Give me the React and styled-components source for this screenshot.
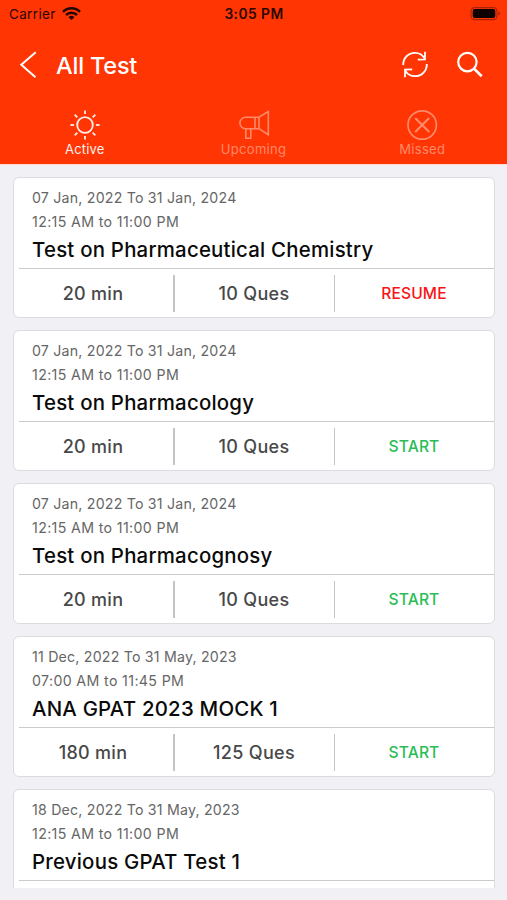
import React from "react";
import styled, { createGlobalStyle } from "styled-components";

const GlobalStyle = createGlobalStyle`
  * {
    box-sizing: border-box;
  }
  body {
    margin: 0;
    background-color: #f0f0f5;
    font-family: Inter, "Liberation Sans", sans-serif;
  }
`;

const Screen = styled.div`
  width: 507px;
  height: 900px;
  display: flex;
  flex-direction: column;
  background-color: #f0f0f5;
  overflow: hidden;
`;

const Header = styled.header`
  height: 165px;
  flex-shrink: 0;
  background-color: #ff3504;
  border-bottom: 1px solid #ffd9ce;
`;

const StatusBar = styled.div`
  height: 27px;
  padding: 0 6px 0 9px;
  display: grid;
  grid-template-columns: 1fr auto 1fr;
  align-items: center;
  color: #2b0700;
  font-size: 13.4px;
`;

const Carrier = styled.div`
  display: flex;
  align-items: center;
  gap: 6px;
  letter-spacing: 0.4px;
`;

const Clock = styled.div`
  padding-right: 2px;
  font-size: 13.8px;
  font-weight: 600;
  letter-spacing: 0.45px;
`;

const Battery = styled.div`
  display: flex;
  justify-content: flex-end;
`;

const NavBar = styled.div`
  height: 77px;
  padding: 0 23px 0 18px;
  display: flex;
  align-items: center;
`;

const Title = styled.h1`
  margin: 0 auto 0 16px;
  color: white;
  font-size: 23.5px;
  font-weight: 500;
  letter-spacing: -0.2px;
`;

const IconButton = styled.button`
  display: flex;
  padding: 0;
  border: none;
  background: none;
  color: white;
  margin-left: ${({ $gap }) => $gap || 0}px;
  margin-top: -1px;
`;

const Tabs = styled.nav`
  display: grid;
  grid-template-columns: 169.6px 168px 169.4px;
`;

const Tab = styled.button`
  display: flex;
  flex-direction: column;
  align-items: center;
  padding: 5px 0 0;
  border: none;
  background: none;
  font-family: inherit;
  font-size: 13px;
  line-height: 16px;
  letter-spacing: ${({ $spacing }) => $spacing || 0.2}px;
  color: ${({ $active }) => ($active ? "#ffefe9" : "#ff8a6a")};
`;

const TestList = styled.main`
  height: 723px;
  padding: 12px 12px 0 13px;
  display: flex;
  flex-direction: column;
  gap: 12px;
  overflow: hidden;
`;

const Card = styled.article`
  height: 141px;
  flex-shrink: 0;
  display: flex;
  flex-direction: column;
  background-color: white;
  border: 1px solid #dcdce0;
  border-radius: 6px;
`;

const CardTop = styled.div`
  height: 91px;
  margin-left: 5px;
  padding: 8px 0 0 13px;
  border-bottom: 1px solid #cbcbcb;
`;

const DateLine = styled.div`
  height: 23.5px;
  line-height: 24px;
  color: #666;
  font-size: 14.2px;
  letter-spacing: ${({ $spacing }) => $spacing || 0}px;
`;

const TestName = styled.h2`
  margin: 0;
  color: #0a0a0a;
  font-size: 20.4px;
  font-weight: 500;
  line-height: 34px;
  letter-spacing: 0.22px;
`;

const CardBottom = styled.div`
  flex: 1;
  padding: 6px 0 5px;
  display: grid;
  grid-template-columns: 161px 160px 1fr;
`;

const Cell = styled.div`
  display: flex;
  align-items: center;
  justify-content: center;
  padding-right: 1px;
  border-right: ${({ $rule }) => $rule || 0}px solid #c4c4c4;
  color: #484848;
  font-size: 18px;
  font-weight: 500;
  letter-spacing: 0.3px;
`;

const Action = styled(Cell)`
  font-size: 15.6px;
  letter-spacing: 0.12px;
  color: ${({ $resume }) => ($resume ? "#f81414" : "#2bbd55")};
`;

const tests = [
  {
    dates: "07 Jan, 2022 To 31 Jan, 2024",
    time: "12:15 AM to 11:00 PM",
    name: "Test on Pharmaceutical Chemistry",
    duration: "20 min",
    questions: "10 Ques",
    action: "RESUME",
  },
  {
    dates: "07 Jan, 2022 To 31 Jan, 2024",
    time: "12:15 AM to 11:00 PM",
    name: "Test on Pharmacology",
    duration: "20 min",
    questions: "10 Ques",
    action: "START",
  },
  {
    dates: "07 Jan, 2022 To 31 Jan, 2024",
    time: "12:15 AM to 11:00 PM",
    name: "Test on Pharmacognosy",
    duration: "20 min",
    questions: "10 Ques",
    action: "START",
  },
  {
    dates: "11 Dec, 2022 To 31 May, 2023",
    time: "07:00 AM to 11:45 PM",
    name: "ANA GPAT 2023 MOCK 1",
    duration: "180 min",
    questions: "125 Ques",
    action: "START",
  },
  {
    dates: "18 Dec, 2022 To 31 May, 2023",
    time: "12:15 AM to 11:00 PM",
    name: "Previous GPAT Test 1",
  },
];

const WifiIcon = () => (
  <svg width="19" height="14" viewBox="0 0 19 14" fill="none" stroke="#230600" strokeWidth="2.5">
    <path d="M1 4.8a12 12 0 0 1 17 0" />
    <path d="M4 8a7.8 7.8 0 0 1 11 0" />
    <path d="M9.5 13.1 6.5 10.2a4.3 4.3 0 0 1 6 0z" fill="#230600" stroke="none" />
  </svg>
);

const BatteryIcon = () => (
  <svg width="31" height="14" viewBox="0 0 31 14">
    <rect x="1" y="0.6" width="26" height="12" rx="3.6" fill="none" stroke="#a92200" strokeWidth="1.1" />
    <rect x="2.7" y="2.1" width="22.6" height="9" rx="2" fill="#0c0100" />
    <path d="M28.4 4.6v4q1.7-.6 1.7-2t-1.7-2z" fill="#a92200" />
  </svg>
);

const BackIcon = () => (
  <svg width="22" height="28" viewBox="0 0 22 28" fill="none" stroke="currentColor" strokeWidth="2">
    <path d="M17.7 1.3 3.3 13.7l14.2 12.6" />
  </svg>
);

const RefreshIcon = () => (
  <svg width="28" height="28" viewBox="0 0 28 28" fill="none" stroke="currentColor" strokeWidth="1.8">
    <path d="M2.2 14.1C2 6.9 7.5 1.8 14 1.8c4.4 0 7.7 2.1 9.7 5.6M24 0.7v7.7l-7.2.2" />
    <path d="M25.8 12.9c.2 7.2-5.3 12.3-11.8 12.3-4.4 0-7.7-2.1-9.7-5.6M4 26.3v-7.7l7.2-.2" />
  </svg>
);

const SearchIcon = () => (
  <svg width="28" height="28" viewBox="0 0 28 28" fill="none" stroke="currentColor">
    <circle cx="11.4" cy="11.1" r="9.2" strokeWidth="2.2" />
    <path d="m18 17.6 7.7 7.7" strokeWidth="2.7" />
  </svg>
);

const SunIcon = () => (
  <svg width="32" height="32" viewBox="0 0 32 32" fill="none" stroke="currentColor" strokeWidth="1.8">
    <circle cx="16" cy="16" r="7.8" />
    {[0, 45, 90, 135, 180, 225, 270, 315].map((deg) => (
      <path key={deg} d="M16 1.4v3.7" transform={`rotate(${deg} 16 16)`} />
    ))}
  </svg>
);

const MegaphoneIcon = () => (
  <svg width="32" height="32" viewBox="0 0 32 32" fill="none" stroke="currentColor" strokeWidth="1.6">
    <path d="M17 8.3H7.6a5.7 5.7 0 0 0 0 11.4H17zM17 8.3h4v11.4h-4M21 8.3l9.3-5.9v23.3L21 19.7" />
    <path d="M7.8 19.7v9.5h5v-9.5" />
  </svg>
);

const MissedIcon = () => (
  <svg width="32" height="32" viewBox="0 0 32 32" fill="none" stroke="currentColor">
    <circle cx="16.2" cy="16" r="14.2" strokeWidth="1.7" />
    <path d="m9.2 9 14 14M23.2 9l-14 14" strokeWidth="2.1" />
  </svg>
);

function TestCard({ test }) {
  return (
    <Card>
      <CardTop>
        <DateLine $spacing={0.2}>{test.dates}</DateLine>
        <DateLine $spacing={0.36}>{test.time}</DateLine>
        <TestName>{test.name}</TestName>
      </CardTop>
      {test.action && (
        <CardBottom>
          <Cell $rule={2}>{test.duration}</Cell>
          <Cell $rule={1}>{test.questions}</Cell>
          <Action $resume={test.action === "RESUME"}>{test.action}</Action>
        </CardBottom>
      )}
    </Card>
  );
}

function App() {
  return (
    <>
      <GlobalStyle />
      <Screen>
        <Header>
          <StatusBar>
            <Carrier>
              Carrier
              <WifiIcon />
            </Carrier>
            <Clock>3:05 PM</Clock>
            <Battery>
              <BatteryIcon />
            </Battery>
          </StatusBar>
          <NavBar>
            <IconButton aria-label="Back">
              <BackIcon />
            </IconButton>
            <Title>All Test</Title>
            <IconButton aria-label="Refresh">
              <RefreshIcon />
            </IconButton>
            <IconButton aria-label="Search" $gap={27}>
              <SearchIcon />
            </IconButton>
          </NavBar>
          <Tabs>
            <Tab $active>
              <SunIcon />
              Active
            </Tab>
            <Tab $spacing={0.3}>
              <MegaphoneIcon />
              Upcoming
            </Tab>
            <Tab $spacing={0.3}>
              <MissedIcon />
              Missed
            </Tab>
          </Tabs>
        </Header>
        <TestList>
          {tests.map((test) => (
            <TestCard key={test.name} test={test} />
          ))}
        </TestList>
      </Screen>
    </>
  );
}

export default App;
